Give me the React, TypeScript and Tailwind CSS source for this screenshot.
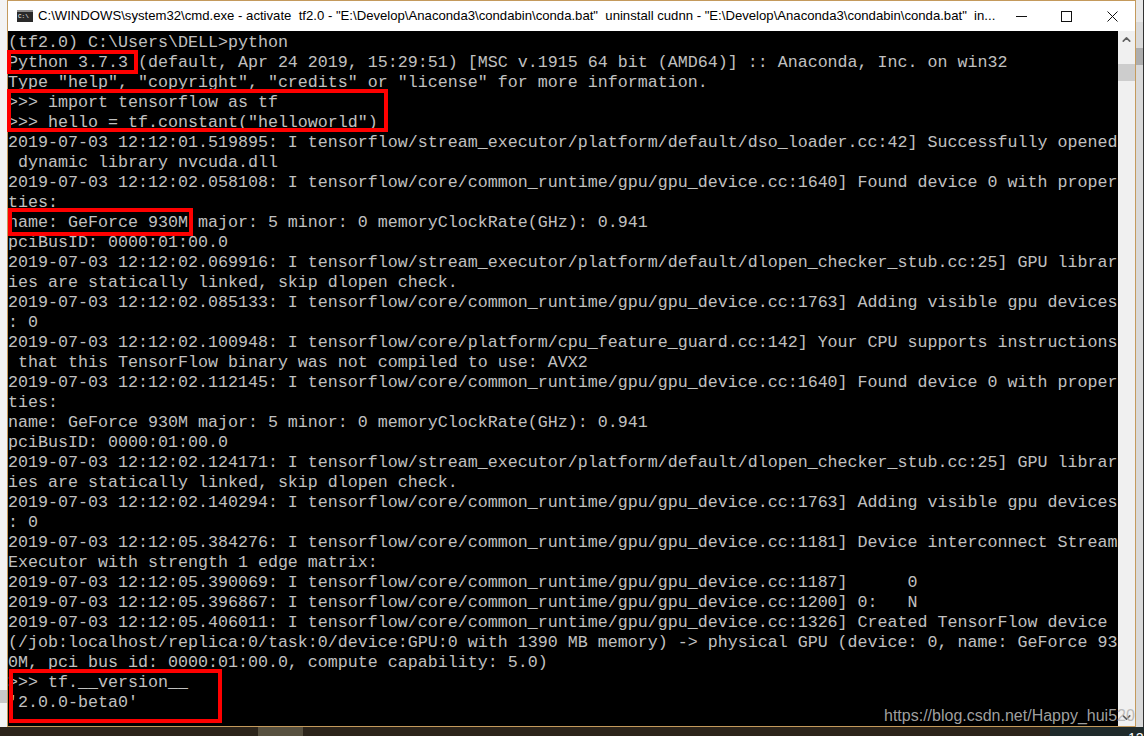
import { ChevronUp, ChevronDown } from "lucide-react";

const lines = [
  "(tf2.0) C:\\Users\\DELL>python",
  "Python 3.7.3 (default, Apr 24 2019, 15:29:51) [MSC v.1915 64 bit (AMD64)] :: Anaconda, Inc. on win32",
  'Type "help", "copyright", "credits" or "license" for more information.',
  ">>> import tensorflow as tf",
  '>>> hello = tf.constant("helloworld")',
  "2019-07-03 12:12:01.519895: I tensorflow/stream_executor/platform/default/dso_loader.cc:42] Successfully opened",
  " dynamic library nvcuda.dll",
  "2019-07-03 12:12:02.058108: I tensorflow/core/common_runtime/gpu/gpu_device.cc:1640] Found device 0 with proper",
  "ties:",
  "name: GeForce 930M major: 5 minor: 0 memoryClockRate(GHz): 0.941",
  "pciBusID: 0000:01:00.0",
  "2019-07-03 12:12:02.069916: I tensorflow/stream_executor/platform/default/dlopen_checker_stub.cc:25] GPU librar",
  "ies are statically linked, skip dlopen check.",
  "2019-07-03 12:12:02.085133: I tensorflow/core/common_runtime/gpu/gpu_device.cc:1763] Adding visible gpu devices",
  ": 0",
  "2019-07-03 12:12:02.100948: I tensorflow/core/platform/cpu_feature_guard.cc:142] Your CPU supports instructions",
  " that this TensorFlow binary was not compiled to use: AVX2",
  "2019-07-03 12:12:02.112145: I tensorflow/core/common_runtime/gpu/gpu_device.cc:1640] Found device 0 with proper",
  "ties:",
  "name: GeForce 930M major: 5 minor: 0 memoryClockRate(GHz): 0.941",
  "pciBusID: 0000:01:00.0",
  "2019-07-03 12:12:02.124171: I tensorflow/stream_executor/platform/default/dlopen_checker_stub.cc:25] GPU librar",
  "ies are statically linked, skip dlopen check.",
  "2019-07-03 12:12:02.140294: I tensorflow/core/common_runtime/gpu/gpu_device.cc:1763] Adding visible gpu devices",
  ": 0",
  "2019-07-03 12:12:05.384276: I tensorflow/core/common_runtime/gpu/gpu_device.cc:1181] Device interconnect Stream",
  "Executor with strength 1 edge matrix:",
  "2019-07-03 12:12:05.390069: I tensorflow/core/common_runtime/gpu/gpu_device.cc:1187]      0",
  "2019-07-03 12:12:05.396867: I tensorflow/core/common_runtime/gpu/gpu_device.cc:1200] 0:   N",
  "2019-07-03 12:12:05.406011: I tensorflow/core/common_runtime/gpu/gpu_device.cc:1326] Created TensorFlow device",
  "(/job:localhost/replica:0/task:0/device:GPU:0 with 1390 MB memory) -> physical GPU (device: 0, name: GeForce 93",
  "0M, pci bus id: 0000:01:00.0, compute capability: 5.0)",
  ">>> tf.__version__",
  "'2.0.0-beta0'",
];

const App = () => {
  return (
    <div className="relative w-[1144px] h-[736px] overflow-hidden flex flex-col bg-[#2c241a]">
      <div className="flex h-[727px]">
        {/* page behind the window */}
        <div className="w-[7px] flex flex-col bg-[#f3f3f3]">
          <div className="h-[690px]"></div>
          <div className="h-[13px] bg-[#c8c8c8]"></div>
        </div>
        <div className="w-[1129px] flex flex-col border border-[#c49a5c]">
          {/* title bar */}
          <div className="h-[30px] shrink-0 bg-white flex items-center pl-[9px]">
            <div className="w-4 h-[12px] shrink-0 bg-[#2a2a2a] border-t-2 border-[#8c8c8c] flex items-center pl-[1px]">
              <span className="text-[6px] leading-none text-white font-['Liberation_Mono',monospace]">C:\</span>
            </div>
            <span className="ml-[5px] w-[965px] shrink-0 whitespace-pre text-[13.15px] text-black font-['Liberation_Sans',sans-serif]">
              {'C:\\WINDOWS\\system32\\cmd.exe - activate  tf2.0 - "E:\\Develop\\Anaconda3\\condabin\\conda.bat"  uninstall cudnn - "E:\\Develop\\Anaconda3\\condabin\\conda.bat"  in...'}
            </span>
            <div className="ml-[13px] flex items-center gap-[34px] text-[#111]">
              <svg width="11" height="11" viewBox="0 0 11 11" fill="none" stroke="currentColor">
                <path d="M0 5.5H11" />
              </svg>
              <svg width="11" height="11" viewBox="0 0 11 11" fill="none" stroke="currentColor">
                <rect x="0.5" y="0.5" width="10" height="10" />
              </svg>
              <svg className="ml-[1px]" width="11" height="11" viewBox="0 0 11 11" fill="none" stroke="currentColor">
                <path d="M0.5 0.5L10.5 10.5M10.5 0.5L0.5 10.5" />
              </svg>
            </div>
          </div>
          <div className="flex h-[695px]">
            {/* console */}
            <div className="relative w-[1110px] bg-black pt-[2px]">
              <div className="text-[16.67px] leading-[20px] text-[#c0c0c0] whitespace-pre font-['Liberation_Mono',monospace]">
                {lines.map((line, i) => (
                  <div key={i} className="h-5">{line}</div>
                ))}
              </div>
              {/* red marks */}
              <div className="absolute left-[-1px] top-[19px] w-[131px] h-[24px] border-4 border-[#ff0000]"></div>
              <div className="absolute left-[-1px] top-[58px] w-[381px] h-[43px] border-4 border-[#ff0000]"></div>
              <div className="absolute left-0 top-[177px] w-[185px] h-[28px] border-4 border-[#ff0000]"></div>
              <div className="absolute left-[1px] top-[638px] w-[213px] h-[54px] border-4 border-[#ff0000]"></div>
            </div>
            {/* scrollbar */}
            <div className="w-[17px] flex flex-col items-center bg-[#f0f0f0]">
              <div className="h-[17px] flex items-center justify-center text-[#606060]"><ChevronUp size={13} strokeWidth={3} /></div>
              <div className="mt-[16px] h-[17px] w-full bg-[#cdcdcd]"></div>
              <div className="mt-auto h-[17px] flex items-center justify-center text-[#606060]"><ChevronDown size={13} strokeWidth={3} /></div>
            </div>
          </div>
        </div>
        {/* window behind, its scrollbar shows on the right */}
        <div className="w-2 flex flex-col border-r border-[#333333] bg-[#d9d9d9]">
          <div className="h-[22px] bg-[#e8e8e8]"></div>
          <div className="mt-[26px] h-[17px] bg-[#adadad]"></div>
        </div>
      </div>
      <div className="flex h-[9px]">
        <div className="w-[258px] bg-[#2c241a]"></div>
        <div className="w-[45px] bg-[#57503f]"></div>
        <div className="w-[747px] bg-[#2c241a]"></div>
        <div className="flex-1 bg-[#1f2a2b]"></div>
      </div>
      {/* watermark over the window */}
      <div className="absolute left-[884px] top-[706px] text-[16px] leading-[20px] text-[#b4b4b4]/90 font-['Liberation_Sans',sans-serif]">https://blog.csdn.net/Happy_hui520</div>
      <div className="absolute left-[1128px] top-[730px] text-[14px] leading-[16px] text-white font-['Liberation_Sans',sans-serif]">12</div>
    </div>
  );
};

export default App;
